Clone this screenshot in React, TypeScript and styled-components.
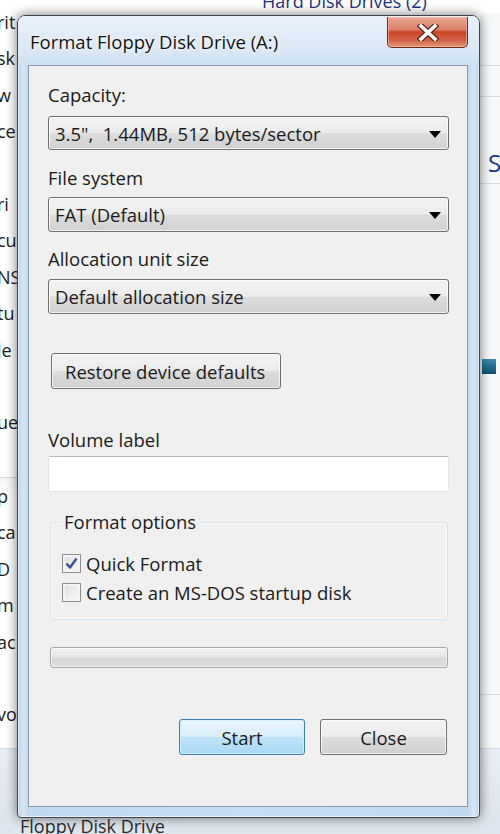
import * as React from 'react';
import styled, { createGlobalStyle } from 'styled-components';

const FONT = `"Open Sans", "Noto Sans", "DejaVu Sans", sans-serif`;

const GlobalStyle = createGlobalStyle`
  html, body {
    margin: 0;
    padding: 0;
    background: #ffffff;
  }
  body {
    font-family: ${FONT};
  }
`;

const Desktop = styled.div`
  position: relative;
  width: 500px;
  height: 834px;
  overflow: hidden;
  background: #ffffff;
  font-family: ${FONT};
`;

/* ---------- explorer window behind the dialog ---------- */

const Explorer = styled.div`
  display: grid;
  grid-template-rows: 748px 1fr;
  height: 100%;
`;

const Main = styled.div`
  display: grid;
  grid-template-columns: 250px 1fr;
  overflow: hidden;
`;

const NavList = styled.div`
  display: flex;
  flex-direction: column;
  padding-top: 4px;
`;

const NavRow = styled.div<{ $divider?: boolean }>`
  height: 36.4px;
  flex-shrink: 0;
  line-height: 36px;
  font-size: 18px;
  color: #1c1c1c;
  white-space: nowrap;
  margin-left: -3px;
  border-top: ${({ $divider }) => ($divider ? '1px solid #d6dbe1' : 'none')};
  background: ${({ $divider }) => ($divider ? 'linear-gradient(#f6f7f9, #ffffff 60%)' : 'transparent')};
`;

const ContentPane = styled.div`
  display: grid;
  grid-template-columns: 230px 1fr;
  grid-template-rows: auto 1fr;
  background: #ffffff;
`;

const GroupHeading = styled.div`
  grid-column: 1 / 3;
  margin-top: -11px;
  padding-left: 12px;
  font-size: 18px;
  line-height: 24px;
  color: #1e3287;
  white-space: nowrap;
`;

const EdgeColumn = styled.div`
  grid-column: 2;
  display: flex;
  flex-direction: column;
  background: #f7f8f9;
`;

const EdgeLine = styled.div<{ $gap: number }>`
  margin-top: ${({ $gap }) => $gap}px;
  height: 1px;
  background: #d9dcdf;
`;

const EdgeLetter = styled.div`
  margin-top: 52px;
  padding-left: 8px;
  font-size: 24px;
  line-height: 28px;
  color: #1e3287;
`;

const EdgeBar = styled.div`
  margin-top: 175px;
  margin-left: 2px;
  width: 14px;
  height: 15px;
  background: linear-gradient(#3b8eb5, #0c4f6e);
`;

const DetailsPane = styled.div`
  background: linear-gradient(#e7edf4, #dde5ee);
  border-top: 1px solid #d3dbe5;
  padding: 65px 0 0 20px;
  font-size: 18px;
  line-height: 24px;
  color: #2a2a2a;
`;

/* ---------- dialog ---------- */

const Dialog = styled.div`
  position: absolute;
  left: 17px;
  top: 15px;
  width: 463px;
  height: 803px;
  box-sizing: border-box;
  display: flex;
  flex-direction: column;
  border: 1px solid #3c4650;
  border-radius: 8px 8px 4px 4px;
  background: linear-gradient(to right, #bcd4ee 0px, #d6e6f7 5px, #c2d8ef 10px, #c9ddf2 50%, #c2d8ef calc(100% - 10px), #d8e8f8 calc(100% - 5px), #b6cfea 100%);
  box-shadow: 0 0 12px rgba(0, 0, 0, 0.55), inset 0 0 0 1px rgba(255, 255, 255, 0.6);
`;

const TitleBar = styled.div`
  height: 49px;
  display: flex;
  align-items: flex-start;
  padding-left: 12px;
  background: linear-gradient(#e9f1fa, #dae7f5 70%, #cfe0f2);
  border-radius: 7px 7px 0 0;
`;

const Title = styled.div`
  align-self: center;
  margin-top: 2px;
  flex: 1;
  font-size: 18.5px;
  color: #111;
  text-shadow: 0 0 6px rgba(255, 255, 255, 0.95), 0 0 2px #fff;
  white-space: nowrap;
`;

const CloseX = styled.div`
  width: 81px;
  height: 31px;
  margin-top: 1px;
  margin-right: 11px;
  box-sizing: border-box;
  display: flex;
  align-items: center;
  justify-content: center;
  border: 1px solid #6b2a1c;
  border-top: none;
  border-radius: 0 0 5px 5px;
  background: linear-gradient(#e9a896 0%, #dc7f69 42%, #c94626 50%, #d2634a 78%, #e89777 100%);
  box-shadow: inset 0 0 0 1px rgba(255, 200, 180, 0.55);
`;

const Client = styled.div`
  margin: 0 11px 0 10px;
  flex: 1;
  display: flex;
  flex-direction: column;
  border: 1px solid #8a9bb0;
  background: #f0f0f0;
  padding: 0 18px 0 19px;
  color: #1a1a1a;
  font-size: 18.5px;
`;

const Label = styled.div<{ $top: number }>`
  margin-top: ${({ $top }) => $top}px;
  height: 22px;
  line-height: 22px;
  white-space: nowrap;
`;

const Select = styled.div<{ $top: number; $height: number }>`
  margin-top: ${({ $top }) => $top}px;
  height: ${({ $height }) => $height}px;
  width: 401px;
  box-sizing: border-box;
  display: flex;
  align-items: center;
  justify-content: space-between;
  padding: 0 7px 0 6px;
  border: 1px solid #707070;
  border-radius: 3px;
  background: linear-gradient(#f3f3f3 0%, #ececec 48%, #dddddd 52%, #d0d0d0 100%);
  box-shadow: inset 0 0 0 1px rgba(255, 255, 255, 0.75);
  white-space: pre;
`;

const Arrow = styled.span`
  width: 0;
  height: 0;
  border-left: 6px solid transparent;
  border-right: 6px solid transparent;
  border-top: 7px solid #000;
  margin-top: 2px;
`;

const Button = styled.div<{ $width: number; $primary?: boolean }>`
  width: ${({ $width }) => $width}px;
  height: 36px;
  box-sizing: border-box;
  display: flex;
  align-items: center;
  justify-content: center;
  border: 1px solid ${({ $primary }) => ($primary ? '#3c7fb1' : '#707070')};
  border-radius: 3px;
  background: ${({ $primary }) =>
    $primary
      ? 'linear-gradient(#e9f5fc 0%, #d8eefb 48%, #bfe3f8 52%, #a9d8f3 100%)'
      : 'linear-gradient(#f3f3f3 0%, #ececec 48%, #dddddd 52%, #d0d0d0 100%)'};
  box-shadow: inset 0 0 0 1px ${({ $primary }) => ($primary ? 'rgba(210, 240, 255, 0.9)' : 'rgba(255, 255, 255, 0.75)')};
  white-space: nowrap;
`;

const RestoreButton = styled(Button)`
  margin-top: 39px;
  margin-left: 3px;
  justify-content: flex-start;
  padding-left: 13px;
`;

const TextInput = styled.div`
  margin-top: 5px;
  width: 401px;
  height: 36px;
  box-sizing: border-box;
  background: #ffffff;
  border: 1px solid #e2e6ea;
  border-top-color: #b5b9bf;
  border-radius: 2px;
`;

const Group = styled.div`
  position: relative;
  margin: 30px 1px 0 2px;
  height: 98px;
  box-sizing: border-box;
  padding: 26px 0 0 11px;
  display: flex;
  flex-direction: column;
  border: 1px solid #d5dfe5;
  border-radius: 3px;
  box-shadow: inset 0 0 0 1px #fbfbfb;
`;

const Legend = styled.span`
  position: absolute;
  left: 9px;
  top: -12px;
  padding: 0 4px;
  line-height: 22px;
  background: #f0f0f0;
`;

const CheckRow = styled.div`
  height: 29px;
  display: flex;
  align-items: center;
  gap: 5px;
  white-space: nowrap;
`;

const Box = styled.span`
  width: 19px;
  height: 19px;
  box-sizing: border-box;
  display: flex;
  align-items: center;
  justify-content: center;
  border: 1px solid #8e8f8f;
  background: linear-gradient(135deg, #dcdcdc, #fbfbfb);
  box-shadow: inset 0 0 0 2px #f4f4f4;
`;

const Progress = styled.div`
  margin: 27px 1px 0 2px;
  height: 21px;
  box-sizing: border-box;
  border: 1px solid #a8a8a8;
  border-radius: 3px;
  background: linear-gradient(#f4f4f4 0%, #e6e6e6 45%, #d8d8d8 55%, #dedede 100%);
  box-shadow: inset 0 0 0 1px rgba(255, 255, 255, 0.6);
`;

const ButtonRow = styled.div`
  margin-top: 51px;
  margin-right: 2px;
  display: flex;
  justify-content: flex-end;
  gap: 15px;
`;

const Check = () => (
  <svg width="13" height="13" viewBox="0 0 13 13">
    <path d="M1.5 6.5 L5 10.5 L11.5 1.5" fill="none" stroke="#3d4f95" strokeWidth="2.4" strokeLinejoin="round" />
  </svg>
);

const CloseGlyph = () => (
  <svg width="22" height="17" viewBox="0 0 22 17">
    <path d="M4 2 L18 15 M18 2 L4 15" stroke="#5a2418" strokeWidth="6" strokeLinecap="square" />
    <path d="M4 2 L18 15 M18 2 L4 15" stroke="#ffffff" strokeWidth="3.6" strokeLinecap="square" />
  </svg>
);

// only the slivers left of the dialog are visible
const navItems: { text: string; divider?: boolean }[] = [
  { text: 'rit' },
  { text: 'sk' },
  { text: 'w' },
  { text: 'ce' },
  { text: '' },
  { text: 'ri' },
  { text: 'cu' },
  { text: 'NS' },
  { text: 'tu' },
  { text: 'le' },
  { text: '' },
  { text: 'ue' },
  { text: '' },
  { text: 'p', divider: true },
  { text: 'ca' },
  { text: 'D' },
  { text: 'm' },
  { text: 'ac' },
  { text: '' },
  { text: 'vo' },
];

export default function App() {
  return (
    <Desktop>
      <GlobalStyle />
      <Explorer>
        <Main>
          <NavList>
            {navItems.map((item, i) => (
              <NavRow key={i} $divider={item.divider}>
                {item.text}
              </NavRow>
            ))}
          </NavList>
          <ContentPane>
            <GroupHeading>Hard Disk Drives (2)</GroupHeading>
            <div />
            <EdgeColumn>
              <EdgeLine $gap={52} />
              <EdgeLine $gap={30} />
              <EdgeLetter>S</EdgeLetter>
              <EdgeLine $gap={6} />
              <EdgeBar />
              <EdgeLine $gap={320} />
            </EdgeColumn>
          </ContentPane>
        </Main>
        <DetailsPane>Floppy Disk Drive</DetailsPane>
      </Explorer>

      <Dialog>
        <TitleBar>
          <Title>Format Floppy Disk Drive (A:)</Title>
          <CloseX>
            <CloseGlyph />
          </CloseX>
        </TitleBar>
        <Client>
          <Label $top={18}>Capacity:</Label>
          <Select $top={10} $height={34}>
            <span>3.5",  1.44MB, 512 bytes/sector</span>
            <Arrow />
          </Select>
          <Label $top={17}>File system</Label>
          <Select $top={8} $height={35}>
            <span>FAT (Default)</span>
            <Arrow />
          </Select>
          <Label $top={16}>Allocation unit size</Label>
          <Select $top={9} $height={35}>
            <span>Default allocation size</span>
            <Arrow />
          </Select>
          <RestoreButton $width={230}>Restore device defaults</RestoreButton>
          <Label $top={40}>Volume label</Label>
          <TextInput />
          <Group>
            <Legend>Format options</Legend>
            <CheckRow>
              <Box>
                <Check />
              </Box>
              Quick Format
            </CheckRow>
            <CheckRow>
              <Box />
              Create an MS-DOS startup disk
            </CheckRow>
          </Group>
          <Progress />
          <ButtonRow>
            <Button $width={126} $primary>
              Start
            </Button>
            <Button $width={127}>Close</Button>
          </ButtonRow>
        </Client>
        <div style={{ height: 10 }} />
      </Dialog>
    </Desktop>
  );
}
